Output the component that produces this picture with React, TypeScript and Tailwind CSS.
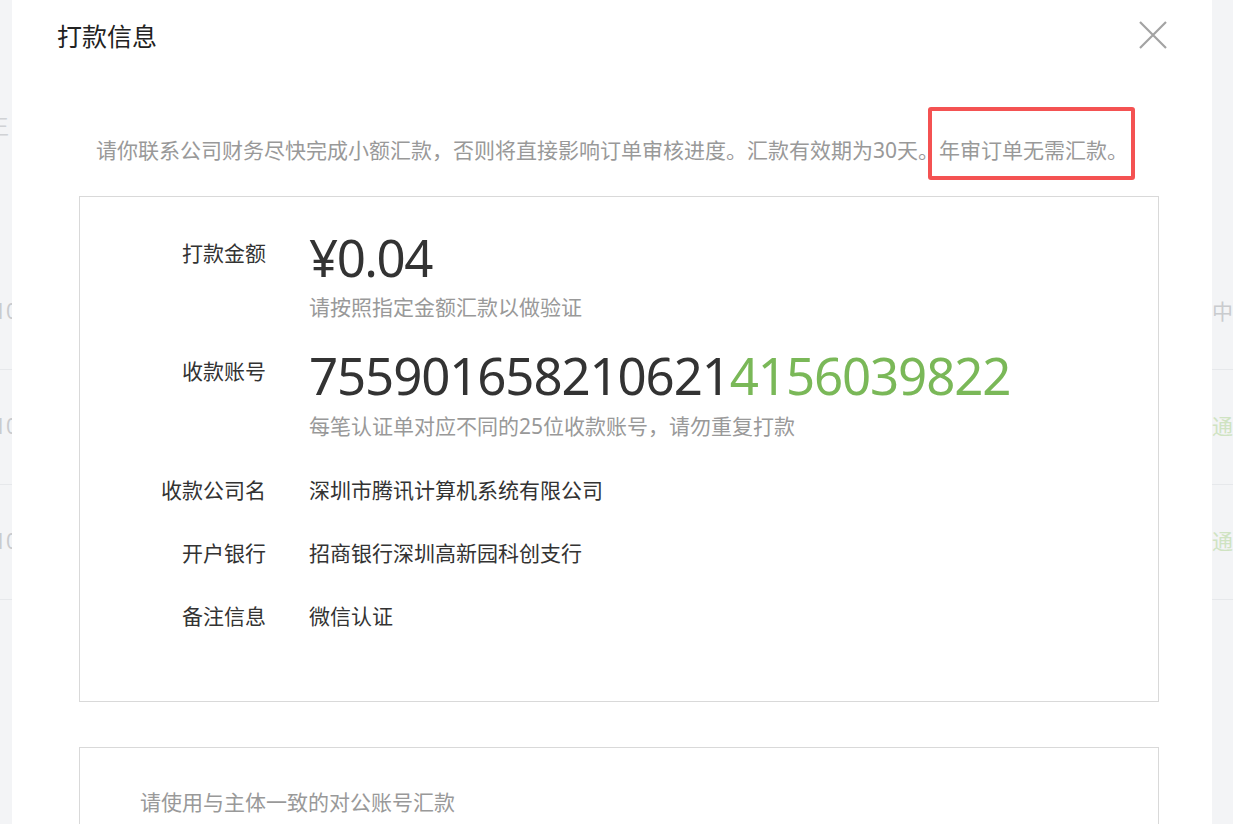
import React from "react";

const font = "font-['Noto_Sans','Noto_Sans_CJK_SC',sans-serif]";

function Backdrop({ side }: { side: "left" | "right" }) {
  const rows =
    side === "left"
      ? [
          { t: "100", c: "text-[#c9cbce] -ml-[6px]" },
          { t: "100", c: "text-[#c9cbce] -ml-[6px]" },
          { t: "100", c: "text-[#c9cbce] -ml-[6px]" },
        ]
      : [
          { t: "中", c: "text-[#c9cbce]" },
          { t: "通过", c: "text-[#cfe3c2]" },
          { t: "通过", c: "text-[#cfe3c2]" },
        ];
  return (
    <div
      className={`h-full overflow-hidden bg-[#f3f4f6] flex flex-col ${
        side === "left" ? "w-[12px]" : "flex-1"
      }`}
    >
      <div className="h-[110px] shrink-0" />
      <div className="h-[32px] shrink-0 text-[21px] leading-[32px] text-[#d0d2d5] whitespace-nowrap -ml-[12px]">
        {side === "left" ? "王" : ""}
      </div>
      <div className="h-[113px] shrink-0" />
      {rows.map((r, i) => (
        <div
          key={i}
          className={`h-[115px] shrink-0 flex items-center border-b border-[#e6e8eb] text-[21px] whitespace-nowrap ${r.c}`}
        >
          {r.t}
        </div>
      ))}
    </div>
  );
}

function InfoRow({
  label,
  children,
  className = "",
}: {
  label: string;
  children: React.ReactNode;
  className?: string;
}) {
  return (
    <div className={`flex items-start ${className}`}>
      <div className="w-[186px] text-right text-[21px] leading-[28px] text-[#333]">
        {label}
      </div>
      <div className="ml-[43px] text-[21px] leading-[28px] text-[#333]">
        {children}
      </div>
    </div>
  );
}

export default function App() {
  return (
    <div className={`w-[1233px] h-[824px] overflow-hidden flex ${font}`}>
      <Backdrop side="left" />

      <div className="w-[1200px] h-full bg-white shrink-0">
        {/* header */}
        <div className="pt-[20px] px-[45px] flex items-start justify-between">
          <h2 className="text-[25px] leading-[32px] text-[#222]">打款信息</h2>
          <svg width="28" height="28" viewBox="0 0 28 28" className="mt-[1px]">
            <path
              d="M1 1 L27 27 M27 1 L1 27"
              stroke="#a3a3a3"
              strokeWidth="2.2"
              fill="none"
            />
          </svg>
        </div>

        {/* notice */}
        <div className="relative mt-[84px] pl-[84px] text-[21px] leading-[28px] text-[#999]">
          请你联系公司财务尽快完成小额汇款，否则将直接影响订单审核进度。汇款有效期为30天。年审订单无需汇款。
          <div className="absolute left-[916px] top-[-29px] w-[207px] h-[73px] border-[4px] border-[#f45252] rounded-[3px]" />
        </div>

        {/* payment details */}
        <div className="mt-[32px] ml-[67px] w-[1080px] h-[506px] border border-[#d9d9d9] pt-[32px]">
          <div className="flex items-start">
            <div className="w-[186px] mt-[10px] text-right text-[21px] leading-[28px] text-[#333]">
              打款金额
            </div>
            <div className="ml-[43px]">
              <div className="text-[51px] leading-[56px] tracking-[-1.5px] text-[#333]">
                ¥0.04
              </div>
              <div className="mt-[8px] text-[21px] leading-[28px] text-[#999]">
                请按照指定金额汇款以做验证
              </div>
            </div>
          </div>

          <div className="flex items-start mt-[26px]">
            <div className="w-[186px] mt-[10px] text-right text-[21px] leading-[28px] text-[#333]">
              收款账号
            </div>
            <div className="ml-[43px]">
              <div className="text-[51px] leading-[56px] tracking-[-1.12px] text-[#333]">
                755901658210621
                <span className="text-[#7ab858]">4156039822</span>
              </div>
              <div className="mt-[9px] text-[21px] leading-[28px] text-[#999]">
                每笔认证单对应不同的25位收款账号，请勿重复打款
              </div>
            </div>
          </div>

          <InfoRow label="收款公司名" className="mt-[36px]">
            深圳市腾讯计算机系统有限公司
          </InfoRow>
          <InfoRow label="开户银行" className="mt-[35px]">
            招商银行深圳高新园科创支行
          </InfoRow>
          <InfoRow label="备注信息" className="mt-[35px]">
            微信认证
          </InfoRow>
        </div>

        {/* remittance tips */}
        <div className="mt-[45px] ml-[67px] w-[1080px] h-[140px] border border-[#d9d9d9] pt-[40px] pl-[60px]">
          <p className="text-[21px] leading-[28px] text-[#999]">
            请使用与主体一致的对公账号汇款
          </p>
        </div>
      </div>

      <Backdrop side="right" />
    </div>
  );
}
